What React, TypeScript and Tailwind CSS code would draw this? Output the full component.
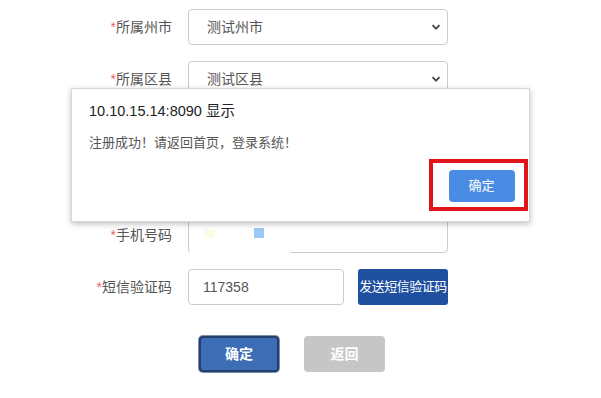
import React from 'react';

const font = { fontFamily: '"Liberation Sans", "Noto Sans CJK SC", sans-serif' };

const Label: React.FC<{ text: string }> = ({ text }) => (
  <div className="w-[174px] pr-[2px] text-right text-[14px] text-[#555]">
    <span className="text-[#e66]">*</span>
    {text}
  </div>
);

const Chevron = () => (
  <svg className="w-[10px] h-[10px] text-[#444]" viewBox="0 0 10 10" fill="none" stroke="currentColor" strokeWidth="1.8">
    <path d="M1.5 3.2l3.5 3.5 3.5-3.5" />
  </svg>
);

const SelectRow: React.FC<{ label: string; value: string }> = ({ label, value }) => (
  <div className="flex items-center gap-[14px] h-[36px]">
    <Label text={label} />
    <div className="w-[260px] h-[36px] border border-[#ccc] rounded-[4px] flex items-center justify-between pl-[18px] pr-[6px] text-[14px] text-[#555]">
      <span>{value}</span>
      <Chevron />
    </div>
  </div>
);

// rows hidden behind the alert
const HiddenRow = () => (
  <div className="flex items-center gap-[14px] h-[36px]">
    <div className="w-[174px]" />
    <div className="w-[260px] h-[36px] border border-[#ccc] rounded-[4px]" />
  </div>
);

export default function App() {
  return (
    <div className="relative w-[601px] h-[398px] bg-white overflow-hidden" style={font}>
      <div className="flex flex-col gap-[16px] pt-[9px]">
        <SelectRow label="所属州市" value="测试州市" />
        <SelectRow label="所属区县" value="测试区县" />
        <HiddenRow />
        <HiddenRow />
        <div className="flex items-center gap-[14px] h-[36px]">
          <Label text="手机号码" />
          <div className="w-[260px] h-[36px] border border-[#ccc] rounded-[4px]" />
        </div>
        <div className="flex items-center gap-[14px] h-[36px]">
          <Label text="短信验证码" />
          <div className="w-[156px] h-[36px] border border-[#ccc] rounded-[4px] flex items-center pl-[14px] text-[14px] text-[#555]">
            117358
          </div>
          <button className="w-[90px] h-[36px] bg-[#1f4f9f] rounded-[3px] text-white text-[13px] whitespace-nowrap tracking-[-0.5px]">
            发送短信验证码
          </button>
        </div>
        <div className="flex gap-[25px] pl-[199px] pt-[15px]">
          <button className="w-[80px] h-[36px] bg-[#3c6db5] rounded-[4px] border-2 border-[#22406b] ring-1 ring-[#7d8ea8] text-white text-[14px] font-bold">
            确定
          </button>
          <button className="w-[81px] h-[36px] bg-[#c6c6c6] rounded-[4px] text-white text-[14px] font-bold">
            返回
          </button>
        </div>
      </div>

      {/* obscured patch over phone input */}
      <div className="absolute left-[190px] top-[213px] w-[100px] h-[43px] bg-white">
        <div className="absolute left-[14px] top-[17px] w-[10px] h-[8px] bg-[#fbfbe6]" />
        <div className="absolute left-[64px] top-[15px] w-[10px] h-[10px] bg-[#9cc8f5]" />
      </div>

      {/* alert dialog */}
      <div className="absolute left-[71px] top-[88px] w-[459px] h-[134px] bg-white border border-[#d8d8d8] shadow-[0_2px_6px_rgba(0,0,0,0.25)]">
        <div className="pl-[17px] pt-[12px] text-[14.5px] text-[#222]">10.10.15.14:8090 显示</div>
        <div className="pl-[17px] pt-[10px] text-[13px] text-[#555]">注册成功！请返回首页，登录系统！</div>
        <div className="absolute left-[357px] top-[70px] w-[99px] h-[52px] border-[4px] border-[#e0141b] flex items-center justify-center">
          <button className="w-[66px] h-[32px] bg-[#4a8ce3] rounded-[4px] text-white text-[13px] mt-[2px] ml-[6px]">
            确定
          </button>
        </div>
      </div>
    </div>
  );
}
